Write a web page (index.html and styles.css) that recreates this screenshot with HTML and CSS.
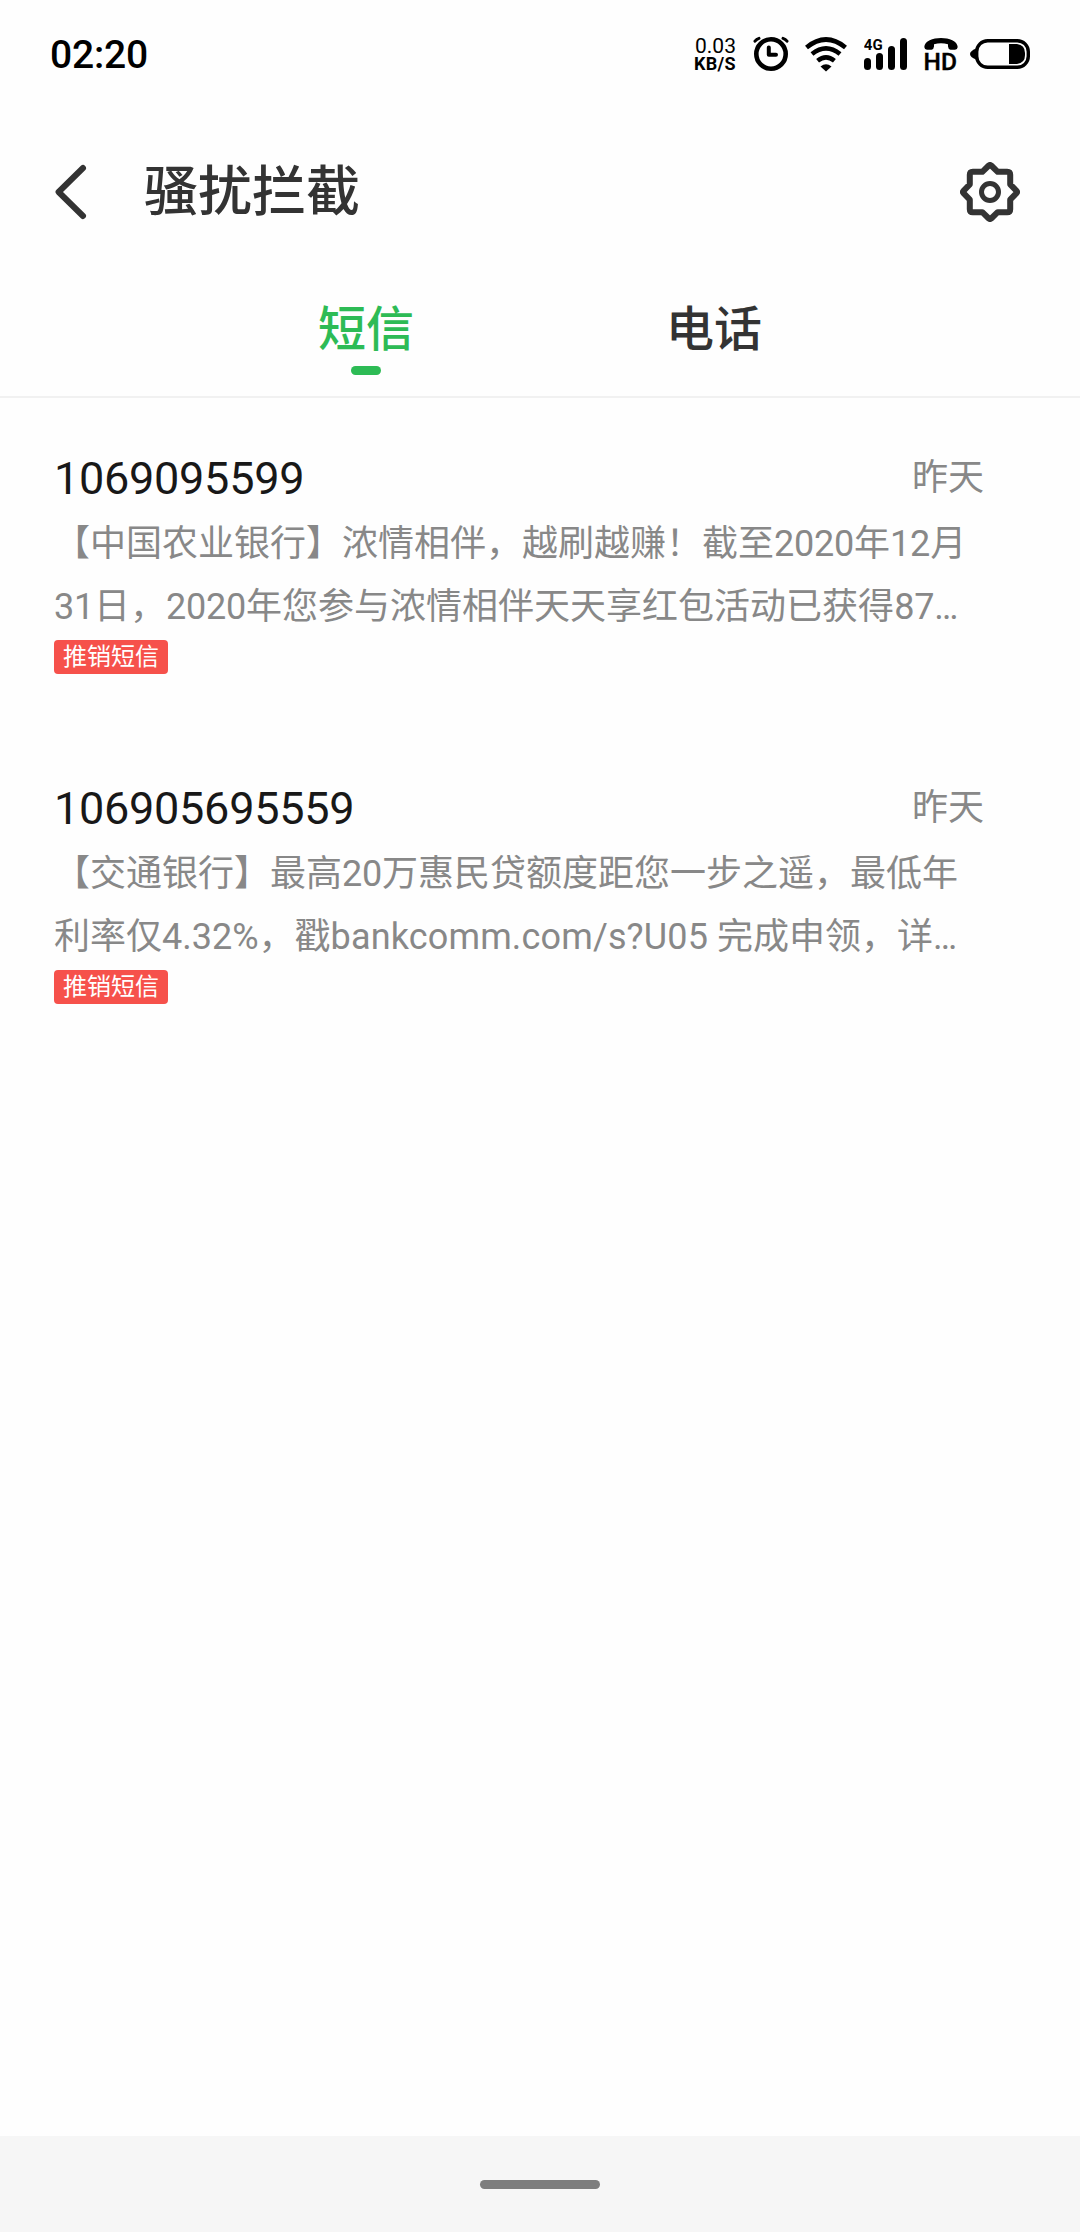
FILE: index.html
```html
<!DOCTYPE html>
<html lang="zh-CN">
<head>
<meta charset="utf-8">
<title>骚扰拦截</title>
<link rel="stylesheet" href="styles.css">
</head>
<body>
<div class="screen">
  <div class="status-bar">
    <span class="clock">02:20</span>
    <div class="status-icons">
      <div class="net-speed"><span class="speed-value">0.03</span><span class="speed-unit">KB/S</span></div>
      <svg width="36" height="40" viewBox="753 34 36 40" fill="none" stroke="#000">
        <circle cx="771" cy="54" r="14.7" stroke-width="4.6"/>
        <path d="M768.8 47.5V54.8H776" stroke-width="4" stroke-linecap="round" stroke-linejoin="round"/>
        <path d="M755 41.2Q756.5 39.2 759 38.4M787 41.2Q785.5 39.2 783 38.4" stroke-width="3" stroke-linecap="round"/>
      </svg>
      <svg width="43" height="40" viewBox="805 34 43 40" fill="none" stroke="#000" stroke-width="4.6">
        <path d="M806.5 47.5Q826 31.5 845.5 47.5M812 54Q826 42.8 840 54M817.6 60.7Q826 54 834.4 60.7"/>
        <path d="M820.5 66.5Q826 62 831.5 66.5L826 71.5Z" fill="#000" stroke="none"/>
      </svg>
      <svg width="44" height="40" viewBox="864 34 44 40">
        <rect x="864" y="58" width="7" height="12" rx="3.5"/>
        <rect x="876" y="53" width="7" height="17" rx="3.5"/>
        <rect x="888" y="46" width="7" height="24" rx="3.5"/>
        <rect x="900" y="38" width="7" height="32" rx="3.5"/>
        <text class="network-label" x="863.8" y="49.8">4G</text>
      </svg>
      <svg class="hd-icon" width="36" height="44" viewBox="924 32 36 44">
        <path d="M924.3 47C925 35 957 35 957.7 47Q957.5 49.5 955 49.8H950.5Q948.3 49.5 948 46.5V44.3Q941 42.2 934 44.3V46.5Q933.7 49.5 931.5 49.8H927Q924.5 49.5 924.3 47Z"/>
        <text class="hd-label" x="923.6" y="69.7">HD</text>
      </svg>
      <svg class="battery-icon" width="60" height="40" viewBox="970 34 60 40">
        <rect x="976.7" y="40.7" width="51.6" height="26.6" rx="11" fill="none" stroke="#000" stroke-width="3.4"/>
        <path d="M1009 44H1017Q1025 45 1025 53V55Q1025 63 1017 64H1009Z"/>
        <path d="M976 48.5Q970 51 970 54T976 59.5Z"/>
      </svg>
    </div>
  </div>

  <header class="header">
    <svg class="back" width="36" height="60" viewBox="54 162 36 60">
      <path d="M83 168L58.6 192L83 216" fill="none" stroke="#333" stroke-width="6" stroke-linecap="round" stroke-linejoin="round"/>
    </svg>
    <h1 class="title">骚扰拦截</h1>
    <svg class="settings" width="60" height="60" viewBox="-30 -30 60 60" fill="none" stroke="#333" stroke-linejoin="round">
      <path stroke-width="6" d="M-1.2 -26.5Q0 -27.5 1.2 -26.5L7.7 -20.2H17.2Q20.2 -20.2 20.2 -17.2V-7.7L26.5 -1.2Q27.5 0 26.5 1.2L20.2 7.7V17.2Q20.2 20.2 17.2 20.2H7.7L1.2 26.5Q0 27.5 -1.2 26.5L-7.7 20.2H-17.2Q-20.2 20.2 -20.2 17.2V7.7L-26.5 1.2Q-27.5 0 -26.5 -1.2L-20.2 -7.7V-17.2Q-20.2 -20.2 -17.2 -20.2H-7.7Z"/>
      <circle r="8.5" stroke-width="5"/>
    </svg>
  </header>

  <nav class="tabs">
    <div class="tab tab-active">短信</div>
    <div class="tab">电话</div>
  </nav>

  <main class="messages">
    <article class="message">
      <div class="message-head"><span class="sender">1069095599</span><span class="date">昨天</span></div>
      <p class="preview">【中国农业银行】浓情相伴，越刷越赚！截至<span class="num">2020</span>年<span class="num">12</span>月<br><span class="num">31</span>日，<span class="num">2020</span>年您参与浓情相伴天天享红包活动已获得<span class="num">87</span>…</p>
      <span class="tag">推销短信</span>
    </article>
    <article class="message">
      <div class="message-head"><span class="sender">106905695559</span><span class="date">昨天</span></div>
      <p class="preview">【交通银行】最高<span class="num">20</span>万惠民贷额度距您一步之遥，最低年<br>利率仅4.32%，戳<span class="link">bankcomm.com/s?U05</span> 完成申领，详…</p>
      <span class="tag">推销短信</span>
    </article>
  </main>

  <footer class="gesture-bar"><div class="gesture-pill"></div></footer>
</div>
</body>
</html>
```
FILE: styles.css
```css
* { box-sizing: border-box; }

body {
  margin: 0;
  background: #fff;
  font-family: Roboto, "Noto Sans CJK SC", sans-serif;
}

svg { display: block; flex: none; }

.screen {
  display: flex;
  flex-direction: column;
  width: 1080px;
  height: 2232px;
  background: #fefefe;
  overflow: hidden;
}

.status-bar {
  display: flex;
  align-items: center;
  justify-content: space-between;
  height: 108px;
  padding: 0 50px;
  color: #000;
}

.clock {
  padding-top: 2px;
  font-size: 39px;
  line-height: 48px;
  font-weight: 500;
  letter-spacing: -0.2px;
}

.status-icons { display: flex; align-items: center; gap: 16px; }

.net-speed {
  display: flex;
  flex-direction: column;
  align-items: flex-start;
  width: 43px;
  white-space: nowrap;
}
.speed-value { padding-left: 1px; font-size: 21px; line-height: 20px; }
.speed-unit { font-size: 18px; line-height: 16px; font-weight: 700; letter-spacing: 0.3px; }

.network-label { font-size: 15px; font-weight: 700; }
.hd-label { font-size: 24.5px; font-weight: 500; stroke: #000; stroke-width: 0.4px; }
.battery-icon { margin-left: -6px; }

.header {
  display: flex;
  align-items: center;
  height: 168px;
  padding: 0 60px 0 54px;
  color: #333;
}
.title {
  flex: 1;
  margin: 0 0 0 54px;
  padding-top: 2px;
  font-size: 54px;
  line-height: 60px;
  font-weight: 500;
}

.tabs {
  display: flex;
  justify-content: center;
  height: 122px;
  padding-top: 24px;
  border-bottom: 2px solid #f1f1f1;
}
.tab {
  display: flex;
  flex-direction: column;
  align-items: center;
  gap: 6px;
  width: 348px;
  color: #333;
  font-size: 48px;
  line-height: 60px;
  font-weight: 500;
}
.tab-active { color: #2dbb55; }
.tab-active::after {
  content: "";
  width: 30px;
  height: 9px;
  border-radius: 4.5px;
  background: #2dbb55;
}

.messages {
  flex: 1;
  display: flex;
  flex-direction: column;
  gap: 108px;
  padding: 54px 96px 0 54px;
}
.message {
  display: flex;
  flex-direction: column;
  align-items: flex-start;
  height: 222px;
}
.message-head {
  display: flex;
  align-self: stretch;
  justify-content: space-between;
  height: 61px;
}
.sender { color: #181818; font-size: 45px; line-height: 54px; letter-spacing: -0.27px; }
.date { color: #888; font-size: 36px; line-height: 53px; }
.preview {
  margin: 0 0 1px;
  color: #888;
  font-size: 36px;
  line-height: 63px;
  white-space: nowrap;
}
.num { letter-spacing: -0.22px; }
.link { letter-spacing: 0.15px; }
.tag {
  padding: 0 9px;
  border-radius: 4px;
  background: #f6514b;
  color: #fff;
  font-size: 24px;
  line-height: 34px;
}

.gesture-bar {
  display: flex;
  justify-content: center;
  height: 96px;
  padding-top: 44px;
  background: #f6f6f6;
}
.gesture-pill {
  width: 120px;
  height: 9px;
  border-radius: 4.5px;
  background: #7e7e7e;
}
```
